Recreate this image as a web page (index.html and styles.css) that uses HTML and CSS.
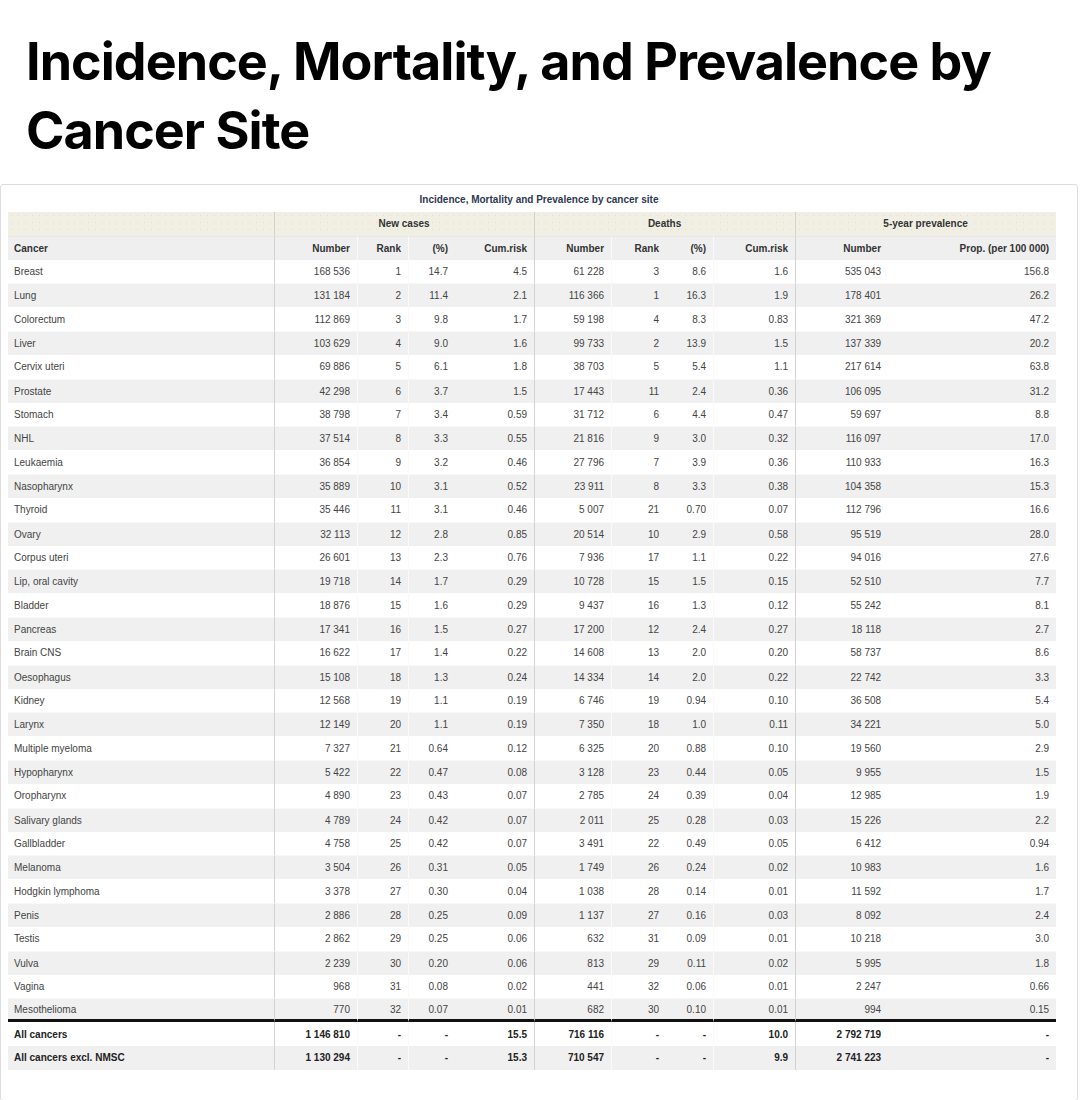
FILE: index.html
```html
<!DOCTYPE html>
<html lang="en">
<head>
<meta charset="utf-8">
<title>Incidence, Mortality, and Prevalence by Cancer Site</title>
<link rel="stylesheet" href="styles.css">
</head>
<body>
<h1 class="title">Incidence, Mortality, and Prevalence by Cancer Site</h1>
<div class="card">
  <div class="caption">Incidence, Mortality and Prevalence by cancer site</div>
  <table class="data">
    <colgroup>
      <col style="width:266px"><col style="width:83px"><col style="width:51px"><col style="width:47px"><col style="width:79px"><col style="width:77px"><col style="width:55px"><col style="width:47px"><col style="width:82px"><col style="width:93px"><col style="width:168px">
    </colgroup>
    <thead>
      <tr class="groups"><th></th><th colspan="4" class="g">New cases</th><th colspan="4" class="g">Deaths</th><th colspan="2" class="g">5-year prevalence</th></tr>
      <tr class="heads"><th>Cancer</th><th>Number</th><th>Rank</th><th>(%)</th><th>Cum.risk</th><th>Number</th><th>Rank</th><th>(%)</th><th>Cum.risk</th><th>Number</th><th>Prop. (per 100 000)</th></tr>
    </thead>
    <tbody>
      <tr><td>Breast</td><td>168 536</td><td>1</td><td>14.7</td><td>4.5</td><td>61 228</td><td>3</td><td>8.6</td><td>1.6</td><td>535 043</td><td>156.8</td></tr>
      <tr><td>Lung</td><td>131 184</td><td>2</td><td>11.4</td><td>2.1</td><td>116 366</td><td>1</td><td>16.3</td><td>1.9</td><td>178 401</td><td>26.2</td></tr>
      <tr><td>Colorectum</td><td>112 869</td><td>3</td><td>9.8</td><td>1.7</td><td>59 198</td><td>4</td><td>8.3</td><td>0.83</td><td>321 369</td><td>47.2</td></tr>
      <tr><td>Liver</td><td>103 629</td><td>4</td><td>9.0</td><td>1.6</td><td>99 733</td><td>2</td><td>13.9</td><td>1.5</td><td>137 339</td><td>20.2</td></tr>
      <tr><td>Cervix uteri</td><td>69 886</td><td>5</td><td>6.1</td><td>1.8</td><td>38 703</td><td>5</td><td>5.4</td><td>1.1</td><td>217 614</td><td>63.8</td></tr>
      <tr><td>Prostate</td><td>42 298</td><td>6</td><td>3.7</td><td>1.5</td><td>17 443</td><td>11</td><td>2.4</td><td>0.36</td><td>106 095</td><td>31.2</td></tr>
      <tr><td>Stomach</td><td>38 798</td><td>7</td><td>3.4</td><td>0.59</td><td>31 712</td><td>6</td><td>4.4</td><td>0.47</td><td>59 697</td><td>8.8</td></tr>
      <tr><td>NHL</td><td>37 514</td><td>8</td><td>3.3</td><td>0.55</td><td>21 816</td><td>9</td><td>3.0</td><td>0.32</td><td>116 097</td><td>17.0</td></tr>
      <tr><td>Leukaemia</td><td>36 854</td><td>9</td><td>3.2</td><td>0.46</td><td>27 796</td><td>7</td><td>3.9</td><td>0.36</td><td>110 933</td><td>16.3</td></tr>
      <tr><td>Nasopharynx</td><td>35 889</td><td>10</td><td>3.1</td><td>0.52</td><td>23 911</td><td>8</td><td>3.3</td><td>0.38</td><td>104 358</td><td>15.3</td></tr>
      <tr><td>Thyroid</td><td>35 446</td><td>11</td><td>3.1</td><td>0.46</td><td>5 007</td><td>21</td><td>0.70</td><td>0.07</td><td>112 796</td><td>16.6</td></tr>
      <tr><td>Ovary</td><td>32 113</td><td>12</td><td>2.8</td><td>0.85</td><td>20 514</td><td>10</td><td>2.9</td><td>0.58</td><td>95 519</td><td>28.0</td></tr>
      <tr><td>Corpus uteri</td><td>26 601</td><td>13</td><td>2.3</td><td>0.76</td><td>7 936</td><td>17</td><td>1.1</td><td>0.22</td><td>94 016</td><td>27.6</td></tr>
      <tr><td>Lip, oral cavity</td><td>19 718</td><td>14</td><td>1.7</td><td>0.29</td><td>10 728</td><td>15</td><td>1.5</td><td>0.15</td><td>52 510</td><td>7.7</td></tr>
      <tr><td>Bladder</td><td>18 876</td><td>15</td><td>1.6</td><td>0.29</td><td>9 437</td><td>16</td><td>1.3</td><td>0.12</td><td>55 242</td><td>8.1</td></tr>
      <tr><td>Pancreas</td><td>17 341</td><td>16</td><td>1.5</td><td>0.27</td><td>17 200</td><td>12</td><td>2.4</td><td>0.27</td><td>18 118</td><td>2.7</td></tr>
      <tr><td>Brain CNS</td><td>16 622</td><td>17</td><td>1.4</td><td>0.22</td><td>14 608</td><td>13</td><td>2.0</td><td>0.20</td><td>58 737</td><td>8.6</td></tr>
      <tr><td>Oesophagus</td><td>15 108</td><td>18</td><td>1.3</td><td>0.24</td><td>14 334</td><td>14</td><td>2.0</td><td>0.22</td><td>22 742</td><td>3.3</td></tr>
      <tr><td>Kidney</td><td>12 568</td><td>19</td><td>1.1</td><td>0.19</td><td>6 746</td><td>19</td><td>0.94</td><td>0.10</td><td>36 508</td><td>5.4</td></tr>
      <tr><td>Larynx</td><td>12 149</td><td>20</td><td>1.1</td><td>0.19</td><td>7 350</td><td>18</td><td>1.0</td><td>0.11</td><td>34 221</td><td>5.0</td></tr>
      <tr><td>Multiple myeloma</td><td>7 327</td><td>21</td><td>0.64</td><td>0.12</td><td>6 325</td><td>20</td><td>0.88</td><td>0.10</td><td>19 560</td><td>2.9</td></tr>
      <tr><td>Hypopharynx</td><td>5 422</td><td>22</td><td>0.47</td><td>0.08</td><td>3 128</td><td>23</td><td>0.44</td><td>0.05</td><td>9 955</td><td>1.5</td></tr>
      <tr><td>Oropharynx</td><td>4 890</td><td>23</td><td>0.43</td><td>0.07</td><td>2 785</td><td>24</td><td>0.39</td><td>0.04</td><td>12 985</td><td>1.9</td></tr>
      <tr><td>Salivary glands</td><td>4 789</td><td>24</td><td>0.42</td><td>0.07</td><td>2 011</td><td>25</td><td>0.28</td><td>0.03</td><td>15 226</td><td>2.2</td></tr>
      <tr><td>Gallbladder</td><td>4 758</td><td>25</td><td>0.42</td><td>0.07</td><td>3 491</td><td>22</td><td>0.49</td><td>0.05</td><td>6 412</td><td>0.94</td></tr>
      <tr><td>Melanoma</td><td>3 504</td><td>26</td><td>0.31</td><td>0.05</td><td>1 749</td><td>26</td><td>0.24</td><td>0.02</td><td>10 983</td><td>1.6</td></tr>
      <tr><td>Hodgkin lymphoma</td><td>3 378</td><td>27</td><td>0.30</td><td>0.04</td><td>1 038</td><td>28</td><td>0.14</td><td>0.01</td><td>11 592</td><td>1.7</td></tr>
      <tr><td>Penis</td><td>2 886</td><td>28</td><td>0.25</td><td>0.09</td><td>1 137</td><td>27</td><td>0.16</td><td>0.03</td><td>8 092</td><td>2.4</td></tr>
      <tr><td>Testis</td><td>2 862</td><td>29</td><td>0.25</td><td>0.06</td><td>632</td><td>31</td><td>0.09</td><td>0.01</td><td>10 218</td><td>3.0</td></tr>
      <tr><td>Vulva</td><td>2 239</td><td>30</td><td>0.20</td><td>0.06</td><td>813</td><td>29</td><td>0.11</td><td>0.02</td><td>5 995</td><td>1.8</td></tr>
      <tr><td>Vagina</td><td>968</td><td>31</td><td>0.08</td><td>0.02</td><td>441</td><td>32</td><td>0.06</td><td>0.01</td><td>2 247</td><td>0.66</td></tr>
      <tr class="last"><td>Mesothelioma</td><td>770</td><td>32</td><td>0.07</td><td>0.01</td><td>682</td><td>30</td><td>0.10</td><td>0.01</td><td>994</td><td>0.15</td></tr>
    </tbody>
    <tfoot>
      <tr><td>All cancers</td><td>1 146 810</td><td>-</td><td>-</td><td>15.5</td><td>716 116</td><td>-</td><td>-</td><td>10.0</td><td>2 792 719</td><td>-</td></tr>
      <tr><td>All cancers excl. NMSC</td><td>1 130 294</td><td>-</td><td>-</td><td>15.3</td><td>710 547</td><td>-</td><td>-</td><td>9.9</td><td>2 741 223</td><td>-</td></tr>
    </tfoot>
  </table>
</div>
</body>
</html>
```

FILE: styles.css
```css
html, body {
  margin: 0;
  padding: 0;
  background: #ffffff;
}

body {
  font-family: "Liberation Sans", Arial, sans-serif;
  color: #000;
}

.title {
  font-family: Inter, "Liberation Sans", sans-serif;
  font-weight: 700;
  font-size: 52px;
  line-height: 69px;
  margin: 27px 0 0 26px;
  letter-spacing: -0.95px;
  color: #000;
}

.card {
  margin-top: 19px;
  width: 1078px;
  box-sizing: border-box;
  border: 1px solid #dddddd;
  border-radius: 3px;
  padding: 9px 0 30px 7px;
}

.caption {
  text-align: center;
  font-size: 10px;
  line-height: 12px;
  font-weight: 700;
  color: #2d3853;
  margin: 0 0 6px 0;
  padding-right: 7px;
}

.data {
  width: 1048px;
  table-layout: fixed;
  border-collapse: separate;
  border-spacing: 0;
  font-size: 10px;
  color: #444;
}

.data tr {
  height: 23.83px;
}

.data th,
.data td {
  padding: 0 7px 0 6px;
  text-align: right;
  white-space: nowrap;
  overflow: hidden;
  vertical-align: middle;
}

.data th:first-child,
.data td:first-child {
  text-align: left;
}

.data th {
  font-weight: 700;
  color: #333;
}

/* group header row */
.groups th {
  background-color: #f1eee4;
  background-image: radial-gradient(circle, rgba(0, 0, 0, 0.07) 0.6px, transparent 0.9px);
  background-size: 7px 7px;
  text-align: center;
}

.groups th.g {
  text-align: center;
  border-left: 1px solid #d2d2d2;
}

.heads th {
  background: #efefef;
  border-top: 1px solid #e6e6e6;
}

/* striped body rows */
.data tbody tr:nth-child(even) td,
.data tfoot tr:nth-child(even) td {
  background: #f0f0f0;
}

/* major dividers between groups */
.heads th:nth-child(2),
.heads th:nth-child(6),
.heads th:nth-child(10),
.data td:nth-child(2),
.data td:nth-child(6),
.data td:nth-child(10) {
  border-left: 1px solid #d2d2d2;
}

/* faint sub-column separators */
.heads th:nth-child(3),
.heads th:nth-child(4),
.heads th:nth-child(7),
.heads th:nth-child(9),
.data td:nth-child(3),
.data td:nth-child(4),
.data td:nth-child(7),
.data td:nth-child(9) {
  border-left: 1px solid #fafafa;
}

.data tbody tr:nth-child(even) td {
  border-top: 1px solid #f8f8f8;
}

.data tr.last td {
  border-bottom: 3px solid #111;
}

.data tfoot td {
  font-weight: 700;
  color: #222;
}
```
